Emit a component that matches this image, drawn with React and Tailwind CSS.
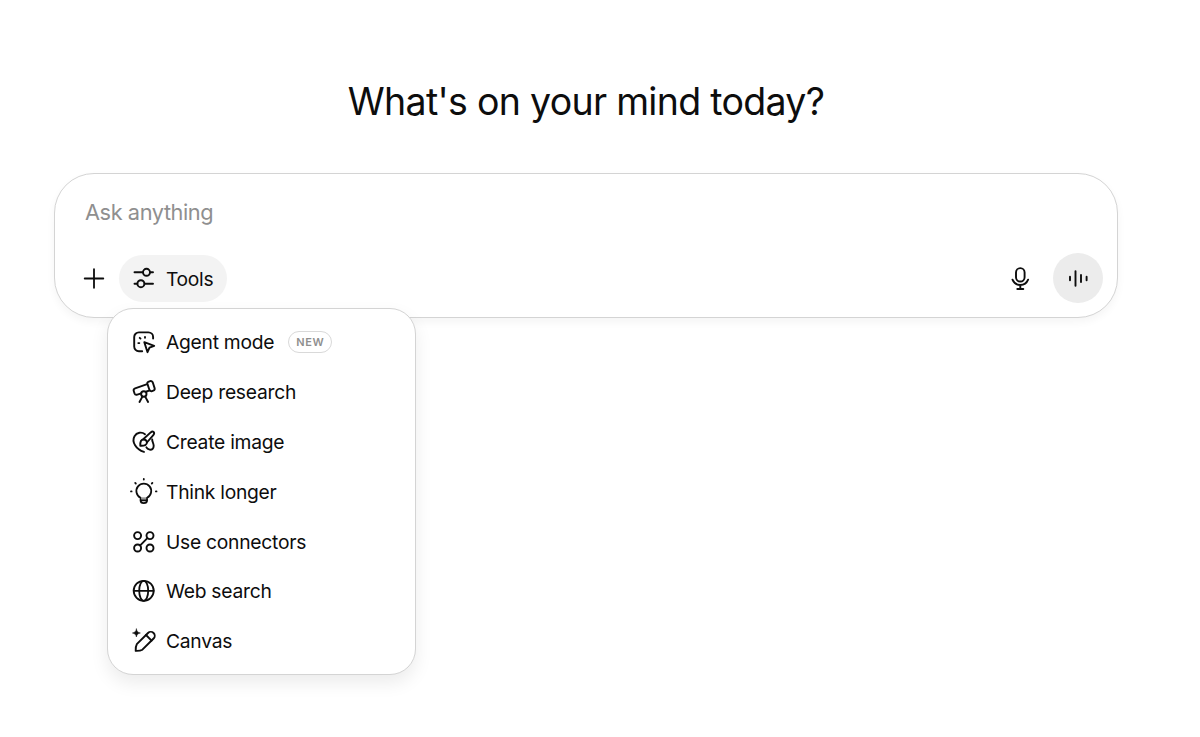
function Icon({ children, width = 1.9 }) {
  return (
    <svg
      className="size-8 shrink-0"
      viewBox="0 0 32 32"
      fill="none"
      stroke="currentColor"
      strokeWidth={width}
      strokeLinecap="round"
      strokeLinejoin="round"
      aria-hidden="true"
    >
      {children}
    </svg>
  );
}

const AgentIcon = () => (
  <Icon>
    <path d="M25.1 12.6v-1.5a4.7 4.7 0 0 0-4.7-4.7h-9.5a4.7 4.7 0 0 0-4.7 4.7v9.4a4.7 4.7 0 0 0 4.7 4.7h3.3" />
    <path d="m16.3 16.1 9.9 3.7-4.7 1.9-2 4.5z" />
    <path d="m11.7 11.8.8.8M17 10.9v.9M10.3 17.1h1" />
  </Icon>
);

const TelescopeIcon = () => (
  <Icon>
    <path d="m20.2 5.9 2-.7a2 2 0 0 1 2.6 1.3l1.8 5.6a2 2 0 0 1-1.3 2.5l-1.3.5a2 2 0 0 1-2.6-1.3l-2-5.9a1.6 1.6 0 0 1 .8-2z" />
    <path d="M19.2 8.2 7.1 12.4a2.2 2.2 0 0 0-1.3 2.8l.7 2.1a2.2 2.2 0 0 0 2.8 1.3l3.9-1.3M18.5 15.5l3.3-1.1" />
    <circle cx="15.8" cy="18" r="2.7" />
    <path d="m14.4 20.6-2.900 5.400M17.200 20.600l2.900 5.400" />
  </Icon>
);

const PaletteIcon = () => (
  <Icon>
    <path d="M17 8.200C13.700 5.600 8.700 6.400 6.500 10.200c-3.100 5.600 1.500 13.300 9.500 15.700" />
    <path d="M24.200 13.500c-.2 1.800 1.500 4 1.500 6.300 0 2.900-1.800 4.300-4 3.800-1.600-.4-2.700-1.100-3.300-2.300" />
    <path d="M15.200 13.200 22.700 6.400c1.300-1.100 2.300-.9 2.900-.4.700.7.7 1.900-.3 3.100l-6.400 7.400" />
    <path d="M15.700 13.500c-2.700 0-3.600 1.900-3.400 6.200 4.200.2 6.900-.6 6.600-3.500-.2-1.600-1.500-2.700-3.200-2.700z" />
  </Icon>
);

const BulbIcon = () => (
  <Icon width={1.8}>
    <path d="M12.600 21.700a7.400 7.400 0 1 1 6.400 0v2.900c0 1.500-1.200 2.600-3.200 2.600s-3.200-1.100-3.200-2.600z" />
    <path d="M13.500 21.300h4.600v2.400h-4.600z" fill="#999" stroke="none" />
    <path d="M12.800 24.400h6" />
    <path d="M15.800 3v.5M7.200 6.900l.6.600M24.400 6.900l-.6.600M3 15.400h.6M28.500 15.400h-.6" />
  </Icon>
);

const ConnectorsIcon = () => (
  <Icon>
    <circle cx="9.600" cy="9.600" r="3.500" />
    <circle cx="22" cy="9.600" r="3.500" />
    <circle cx="9.600" cy="22" r="3.500" />
    <circle cx="22" cy="22" r="3.500" />
    <path d="m12.200 19.400 7.200-7.200" />
  </Icon>
);

const GlobeIcon = () => (
  <Icon width={1.8}>
    <circle cx="15.700" cy="15.800" r="10" />
    <ellipse cx="15.700" cy="15.800" rx="4.500" ry="10" />
    <path d="M5.700 15.800h20" />
  </Icon>
);

const CanvasIcon = () => (
  <Icon>
    <path
      d="M8.400 4c.7 2.700 1.300 3.300 4 4-2.700.7-3.300 1.300-4 4-.7-2.700-1.300-3.300-4-4 2.700-.7 3.300-1.300 4-4z"
      fill="currentColor"
      strokeWidth="0.5"
    />
    <path d="M8.800 19.200 20 8a3.900 3.900 0 0 1 5.600 5.500L14.400 24.700c-2 1.200-4.300 1.300-6.700 1.200-.1-2.400-.1-4.700 1.100-6.700z" />
    <path d="m18 10 5.600 5.600" />
  </Icon>
);

const tools = [
  { label: "Agent mode", icon: AgentIcon, badge: "NEW" },
  { label: "Deep research", icon: TelescopeIcon },
  { label: "Create image", icon: PaletteIcon },
  { label: "Think longer", icon: BulbIcon },
  { label: "Use connectors", icon: ConnectorsIcon },
  { label: "Web search", icon: GlobeIcon },
  { label: "Canvas", icon: CanvasIcon },
];

function ToolsMenu() {
  return (
    <div className="absolute top-[53px] left-[-12px] z-10 w-[309px] rounded-[26px] border border-[#d4d4d4] bg-white pt-[9px] pb-[8.4px] shadow-[0_8px_18px_rgba(0,0,0,0.08)]">
      {tools.map(({ label, icon: ToolIcon, badge }) => (
        <button key={label} className="flex h-[49.8px] w-full items-center pl-5 text-left">
          <ToolIcon />
          <span className="mt-px ml-[6px] text-[19.25px] tracking-[-0.26px] whitespace-nowrap">{label}</span>
          {badge && (
            <span className="ml-[14px] flex h-[22px] w-11 items-center justify-center rounded-full border-[1.5px] border-[#d9d9d9] text-[11px] font-semibold tracking-[0.05em] text-[#8f8f8f]">
              {badge}
            </span>
          )}
        </button>
      ))}
    </div>
  );
}

export default function App() {
  return (
    <main className="h-[737px] overflow-hidden bg-white pt-[76px] pr-[82px] pl-[54px] font-['Inter',sans-serif] text-[#0d0d0d]">
      <h1 className="text-center text-[37.5px] leading-[52px] font-normal tracking-[-0.7px] whitespace-nowrap">What's on your mind today?</h1>

      <div className="mt-[45px] flex h-[145px] flex-col rounded-[40px] border border-[#d4d4d4] bg-white pt-[22px] pr-3.5 pl-[30px] shadow-[0_4px_8px_rgba(0,0,0,0.045)]">
        <div className="text-[21.75px] leading-8 tracking-[-0.42px] text-[#8f8f8f]">Ask anything</div>

        <div className="mt-[25px] flex h-[50px] items-center">
          <button className="-ml-[7px]">
            <Icon width={1.8}>
              <path d="M16 7.200v18.600M6.700 16.500h18.600" />
            </Icon>
          </button>
          <div className="relative ml-[9px]">
            <button className="flex h-[47px] w-[108px] items-center rounded-full bg-[#f3f3f3] pl-2">
              <Icon>
                <path d="M7.500 10.300h8.200M23.200 10.300h2.800M7.500 21.700h2.800M17.600 21.700h8.400" />
                <circle cx="19.500" cy="10.300" r="3.500" />
                <circle cx="13.900" cy="21.700" r="3.500" />
              </Icon>
              <span className="mt-[3px] ml-[7px] text-[19.25px] tracking-[-0.3px]">Tools</span>
            </button>
            <ToolsMenu />
          </div>

          <button className="ml-auto">
            <Icon>
              <rect x="12" y="6.100" width="8.600" height="13.400" rx="4.300" />
              <path d="M8.500 17.700a8.400 8.400 0 0 0 15.600 0M16.300 22.900v4M13.300 27h6" />
            </Icon>
          </button>
          <button className="ml-[17px] flex size-[50px] items-center justify-center rounded-full bg-[#ececec]">
            <Icon>
              <path d="M8 14.700v3.500M13.500 9.100v14.700M19 12.900v7.200M24.600 14.700v3.500" />
            </Icon>
          </button>
        </div>
      </div>
    </main>
  );
}
